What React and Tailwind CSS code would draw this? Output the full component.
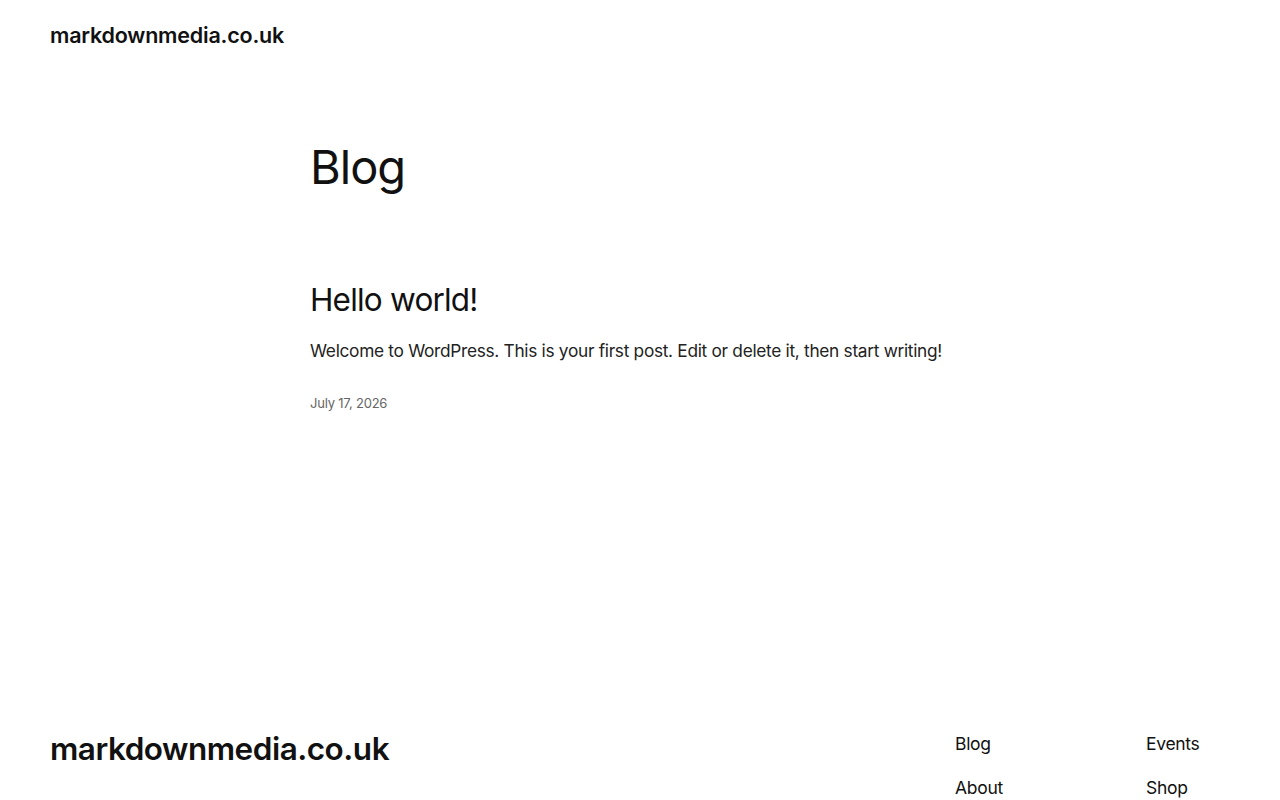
import React from "react";

const font = { fontFamily: "Inter, 'Noto Sans', sans-serif" };

const links = [
  ["Blog", "Events"],
  ["About", "Shop"],
  ["FAQs", "Patterns"],
  ["Authors", "Themes"],
];

export default function App() {
  return (
    <div className="h-screen overflow-y-auto bg-white text-[#111111]" style={font}>
      {/* Header */}
      <header className="px-[50px] pt-[21px] pb-[20px]">
        <a className="text-[21.5px] font-semibold tracking-[-0.2px] leading-[28px]">markdownmedia.co.uk</a>
      </header>

      {/* Main */}
      <main className="pl-[310px] pr-[50px] pb-[276px]">
        <h1 className="mt-[68px] text-[47px] font-normal tracking-[-1px] leading-[60px]">Blog</h1>

        <article className="mt-[83px]">
          <h2 className="text-[31.5px] font-normal tracking-[-0.8px] leading-[40px]">Hello world!</h2>
          <p className="mt-[17px] text-[17.3px] tracking-[-0.3px] leading-[28px] text-[#222222]">
            Welcome to WordPress. This is your first post. Edit or delete it, then start writing!
          </p>
          <p className="mt-[28px] text-[13px] tracking-[-0.2px] leading-[20px] text-[#666666]">July 17, 2026</p>
        </article>
      </main>

      {/* Footer */}
      <footer className="px-[50px] pt-[40px] pb-[120px]">
        <div className="flex justify-between">
          <div>
            <a className="text-[31.5px] font-semibold tracking-[-0.5px] leading-[40px]">markdownmedia.co.uk</a>
          </div>
          <div className="grid grid-cols-[191px_84px] gap-y-[18px] pt-[2px]">
            {links.map(([a, b]) => (
              <React.Fragment key={a}>
                <a className="text-[17.5px] tracking-[-0.3px] leading-[26px]">{a}</a>
                <a className="text-[17.5px] tracking-[-0.3px] leading-[26px]">{b}</a>
              </React.Fragment>
            ))}
          </div>
        </div>
        <p className="mt-[60px] text-[14px] text-[#444444]">Designed with WordPress</p>
      </footer>
    </div>
  );
}
